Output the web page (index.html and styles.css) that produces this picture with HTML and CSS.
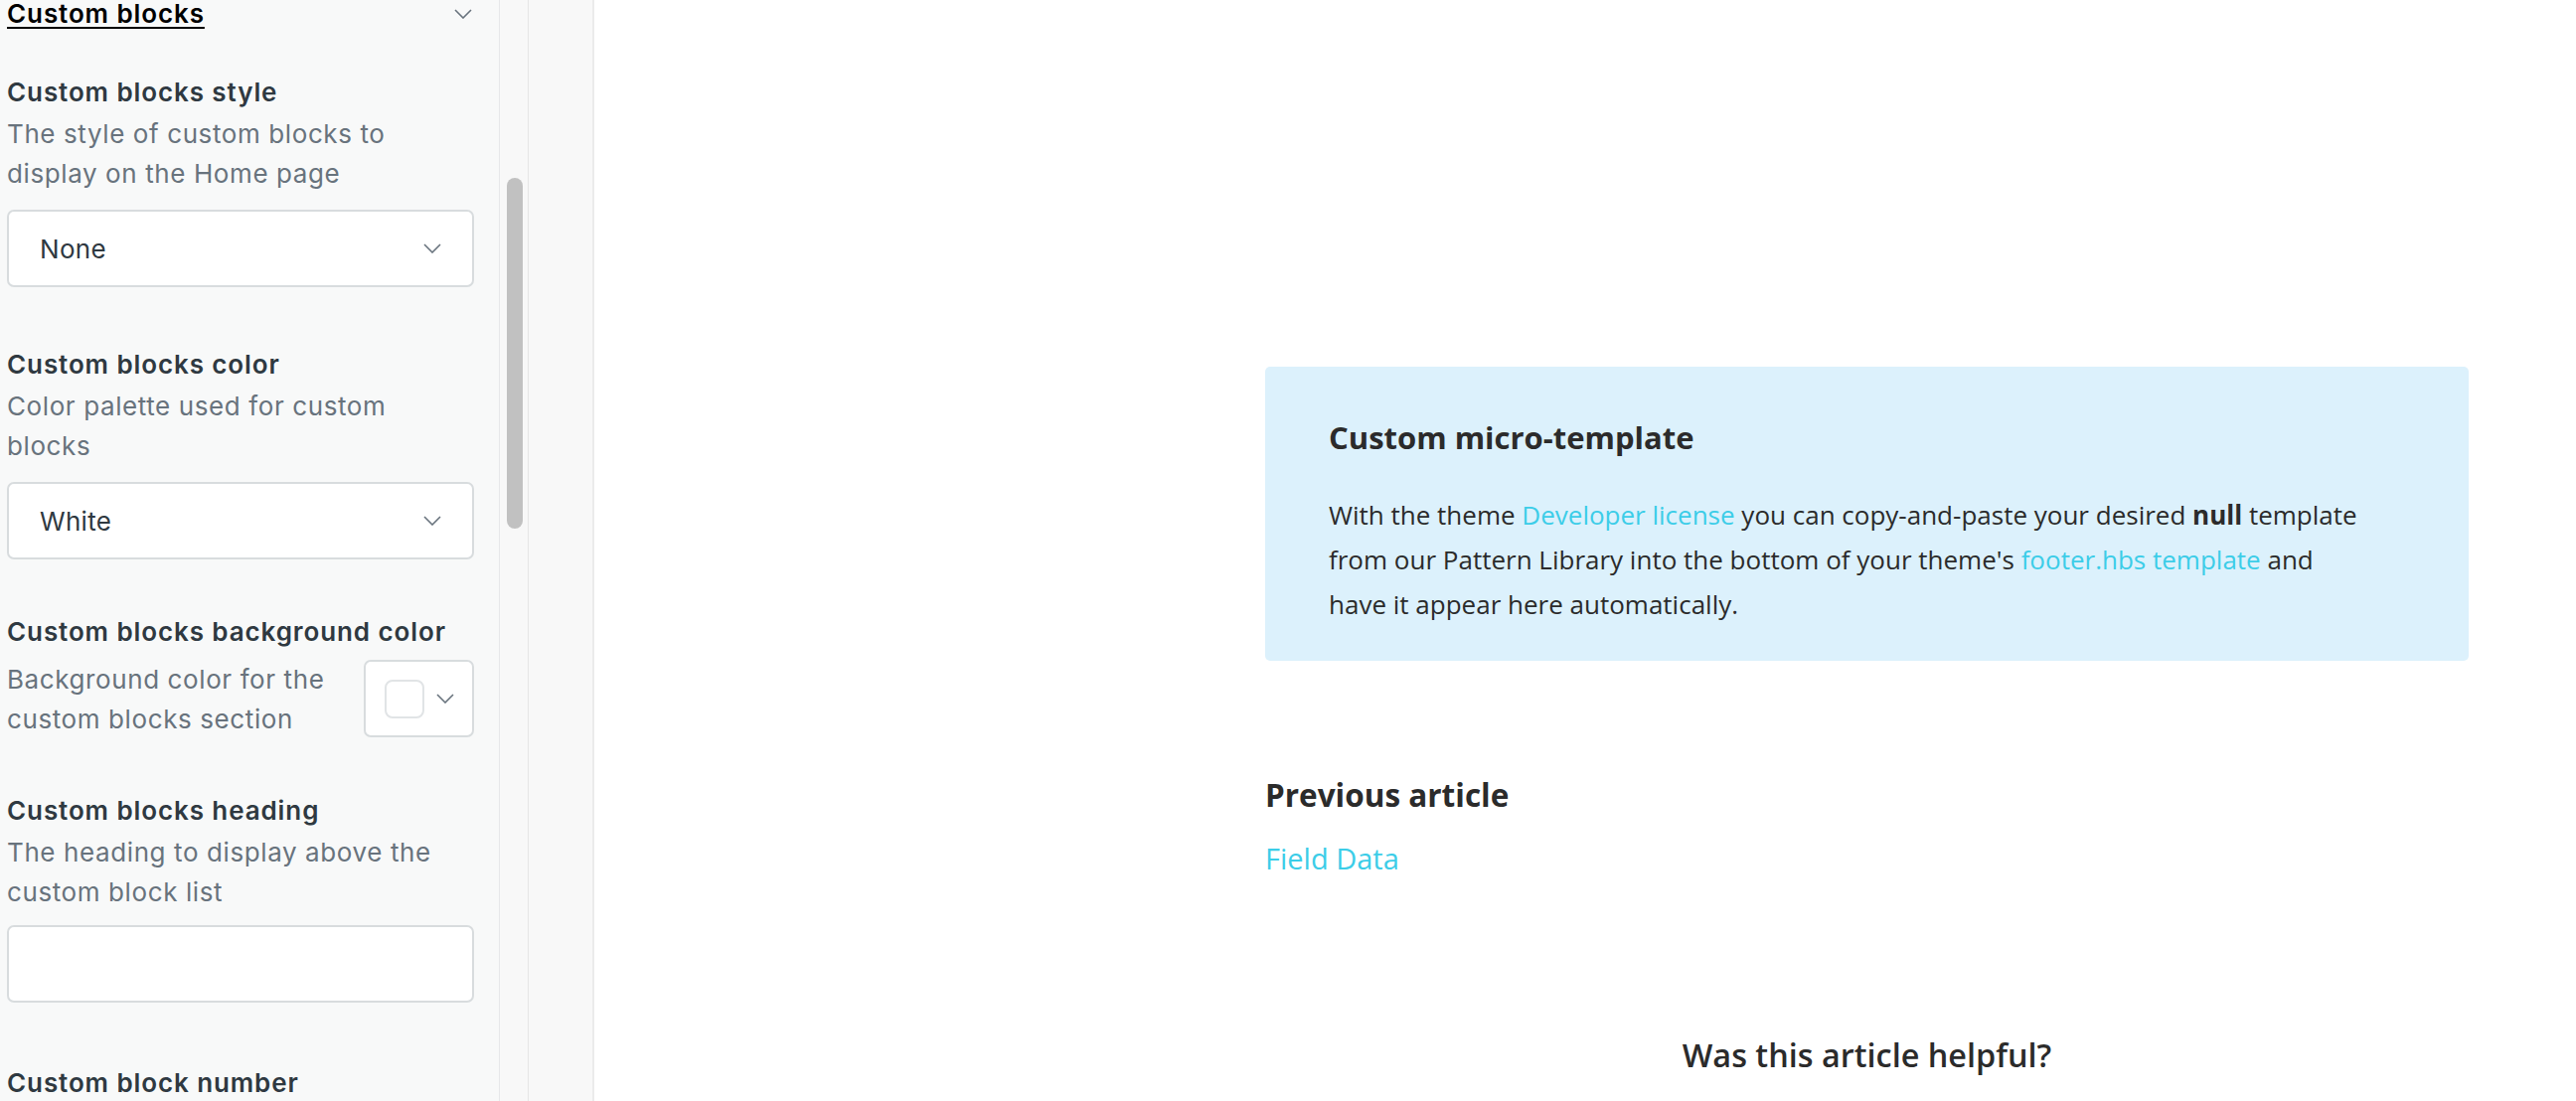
FILE: index.html
```html
<!DOCTYPE html>
<html lang="en">
<head>
<meta charset="utf-8">
<title>Theme editor preview</title>
<link rel="stylesheet" href="styles.css">
</head>
<body>
<div class="app">
  <aside class="panel">
    <div class="section-head">
      <span class="section-title">Custom blocks</span>
      <svg class="chev chev-head" viewBox="0 0 18 10"><path d="M1 1 L9 9 L17 1"/></svg>
    </div>

    <div class="field field-style">
      <div class="label">Custom blocks style</div>
      <div class="hint">The style of custom blocks to display on the Home page</div>
      <div class="select"><span>None</span><svg class="chev" viewBox="0 0 18 10"><path d="M1 1 L9 9 L17 1"/></svg></div>
    </div>

    <div class="field field-palette">
      <div class="label">Custom blocks color</div>
      <div class="hint">Color palette used for custom blocks</div>
      <div class="select"><span>White</span><svg class="chev" viewBox="0 0 18 10"><path d="M1 1 L9 9 L17 1"/></svg></div>
    </div>

    <div class="field field-color">
      <div class="label">Custom blocks background color</div>
      <div class="color-row">
        <div class="hint">Background color for the custom blocks section</div>
        <div class="color-btn"><span class="swatch"></span><svg class="chev" viewBox="0 0 18 10"><path d="M1 1 L9 9 L17 1"/></svg></div>
      </div>
    </div>

    <div class="field field-heading">
      <div class="label">Custom blocks heading</div>
      <div class="hint">The heading to display above the custom block list</div>
      <div class="input"></div>
    </div>

    <div class="field">
      <div class="label">Custom block number</div>
    </div>
  </aside>

  <div class="track"><div class="thumb"></div></div>
  <div class="gutter"></div>

  <main class="preview">
    <div class="column">
      <section class="callout">
        <h3 class="callout-title">Custom micro-template</h3>
        <p class="callout-text">With the theme <a href="#">Developer license</a> you can copy-and-paste your desired <strong>null</strong> template from our Pattern Library into the bottom of your theme's <a href="#">footer.hbs template</a> and have it appear here automatically.</p>
      </section>

      <nav class="prev">
        <h4 class="prev-title">Previous article</h4>
        <a class="prev-link" href="#">Field Data</a>
      </nav>

      <div class="helpful">Was this article helpful?</div>
    </div>
  </main>
</div>
</body>
</html>
```

FILE: styles.css
```css
* { box-sizing: border-box; }

html, body {
  margin: 0;
  padding: 0;
  height: 1108px;
  overflow: hidden;
  background: #ffffff;
}

.app {
  display: flex;
  height: 1108px;
}

/* ---------- settings panel ---------- */
.panel {
  width: 503px;
  flex: 0 0 503px;
  background: #f8f9f9;
  border-right: 1px solid #e6e8ea;
  padding: 0 25px 0 7px;
  font-family: "Inter", "Noto Sans", sans-serif;
  font-size: 26px;
  letter-spacing: 0.6px;
  color: #2f3941;
  overflow: hidden;
}

.section-head {
  display: flex;
  align-items: center;
  justify-content: space-between;
  height: 28px;
  line-height: 28px;
  margin-bottom: 45px;
}

.section-title {
  font-weight: 600;
  letter-spacing: 0.9px;
  color: #000;
  text-decoration: underline;
  text-underline-offset: 4px;
  text-decoration-thickness: 2px;
}

.chev {
  width: 18px;
  height: 10px;
  fill: none;
  stroke: #68737d;
  stroke-width: 1.6;
}

.chev-head { margin-right: 2px; }

.field { margin-bottom: 53px; }
.field-style { margin-bottom: 58px; }
.field-palette { margin-bottom: 53px; }
.field-color { margin-bottom: 53px; }
.field-heading { margin-bottom: 61px; }

.label {
  font-weight: 600;
  letter-spacing: 0.9px;
  line-height: 40px;
  margin-bottom: 2px;
}

.hint {
  color: #68737d;
  line-height: 39.5px;
  padding-right: 24px;
}

.select,
.input {
  margin-top: 17px;
  height: 78px;
  background: #fff;
  border: 2px solid #d8dcde;
  border-radius: 7px;
}

.input { margin-top: 14px; }

.select {
  display: flex;
  align-items: center;
  justify-content: space-between;
  padding: 0 31px 0 31px;
  color: #2f3941;
  letter-spacing: 0.3px;
}

.field-color .label { margin-bottom: 8px; }

.color-row {
  display: flex;
  align-items: flex-start;
  gap: 16px;
}

.color-row .hint { flex: 1; padding-right: 0; }

.color-btn {
  flex: 0 0 111px;
  height: 78px;
  background: #fff;
  border: 2px solid #d8dcde;
  border-radius: 7px;
  display: flex;
  align-items: center;
  padding-left: 19px;
  gap: 12px;
}

.swatch {
  width: 40px;
  height: 39px;
  border: 2px solid #e1e4e6;
  border-radius: 8px;
  background: #fff;
}

/* ---------- scrollbar + gutter ---------- */
.track {
  flex: 0 0 29px;
  background: #f8f8f8;
  border-right: 1px solid #e6e6e6;
  padding: 179px 0 0 7px;
}

.thumb {
  width: 16px;
  height: 353px;
  border-radius: 8px;
  background: #c1c1c1;
}

.gutter {
  flex: 0 0 66px;
  background: #f8f8f8;
  border-right: 2px solid #ebebeb;
}

/* ---------- preview ---------- */
.preview {
  flex: 1;
  background: #fff;
  font-family: "Open Sans", "Lato", sans-serif;
  color: #2b2b2b;
}

.column {
  width: 1211px;
  margin-left: 675px;
  padding-top: 369px;
}

.callout {
  background: #dcf1fc;
  border-radius: 5px;
  padding: 50px 100px 34px 64px;
}

.callout-title {
  margin: 0 0 34px 0;
  font-size: 31px;
  line-height: 43px;
  font-weight: 700;
}

.callout-text {
  margin: 0;
  font-size: 26px;
  line-height: 45px;
}

.callout-text strong { font-weight: 700; }

a {
  color: #3ccde8;
  text-decoration: none;
}

.prev {
  margin-top: 115px;
}

.prev-title {
  margin: 0;
  font-size: 31.5px;
  line-height: 40px;
  font-weight: 700;
}

.prev-link {
  display: inline-block;
  margin-top: 24px;
  font-size: 29px;
  line-height: 40px;
}

.helpful {
  margin-top: 155px;
  text-align: center;
  font-size: 32.4px;
  line-height: 44px;
  font-weight: 600;
}
```
